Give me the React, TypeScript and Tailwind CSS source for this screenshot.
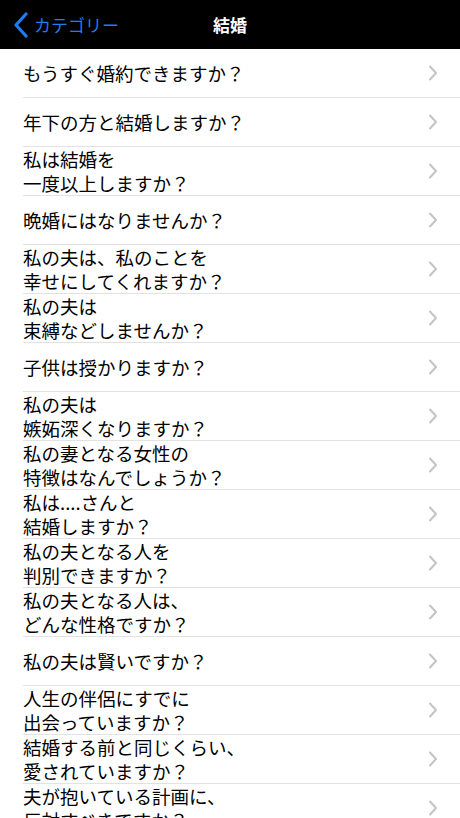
const items: string[][] = [
  ['もうすぐ婚約できますか？'],
  ['年下の方と結婚しますか？'],
  ['私は結婚を', '一度以上しますか？'],
  ['晩婚にはなりませんか？'],
  ['私の夫は、私のことを', '幸せにしてくれますか？'],
  ['私の夫は', '束縛などしませんか？'],
  ['子供は授かりますか？'],
  ['私の夫は', '嫉妬深くなりますか？'],
  ['私の妻となる女性の', '特徴はなんでしょうか？'],
  ['私は....さんと', '結婚しますか？'],
  ['私の夫となる人を', '判別できますか？'],
  ['私の夫となる人は、', 'どんな性格ですか？'],
  ['私の夫は賢いですか？'],
  ['人生の伴侶にすでに', '出会っていますか？'],
  ['結婚する前と同じくらい、', '愛されていますか？'],
  ['夫が抱いている計画に、', '反対すべきですか？'],
];

function Chevron() {
  return (
    <svg width="10" height="16" viewBox="0 0 10 16" className="shrink-0">
      <path d="M2 1.5 L8 8 L2 14.5" fill="none" stroke="#c4c4c8" strokeWidth="2" strokeLinecap="round" strokeLinejoin="round" />
    </svg>
  );
}

export default function App() {
  return (
    <div className="w-[460px] h-[818px] overflow-hidden bg-white" style={{ fontFamily: '"Noto Sans CJK JP", "Noto Sans", sans-serif' }}>
      {/* Nav bar */}
      <div className="relative h-[49px] bg-black flex items-center">
        <div className="flex items-center pl-[13px] gap-[5px] text-[#1f7cf4] text-[17px]">
          <svg width="16" height="26" viewBox="0 0 16 26">
            <path d="M13 2 L3 13 L13 24" fill="none" stroke="#1f7cf4" strokeWidth="3.2" strokeLinecap="round" strokeLinejoin="round" />
          </svg>
          <span className="leading-none">カテゴリー</span>
        </div>
        <div className="absolute inset-0 flex items-center justify-center pointer-events-none">
          <span className="text-white text-[17px] font-bold leading-none">結婚</span>
        </div>
      </div>

      {/* List */}
      <ul>
        {items.map((lines, i) => (
          <li key={i} className="pl-[23px]">
            <div className="h-[49px] border-b border-[#e2e2e4] flex items-center justify-between pr-[22px]">
              <div className="text-[18.5px] leading-[24px] text-black">
                {lines.map((l, j) => (
                  <div key={j}>{l}</div>
                ))}
              </div>
              <Chevron />
            </div>
          </li>
        ))}
      </ul>
    </div>
  );
}
